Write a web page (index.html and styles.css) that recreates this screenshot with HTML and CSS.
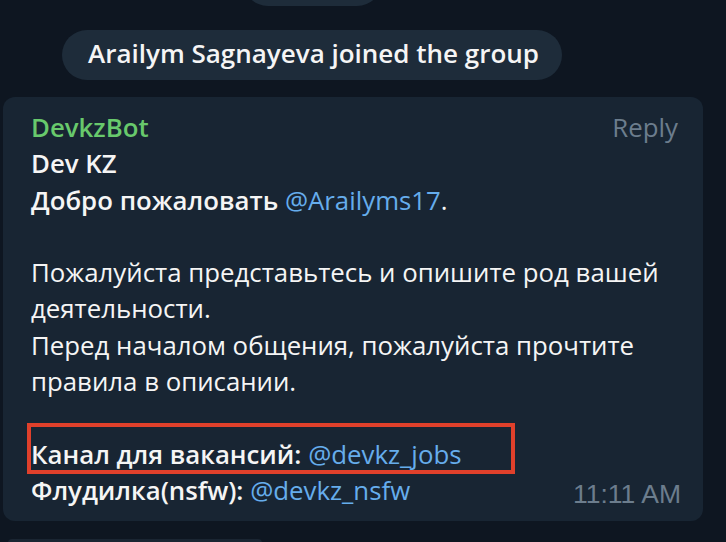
FILE: index.html
```html
<!DOCTYPE html>
<html lang="en">
<head>
    <meta charset="UTF-8">
    <meta name="viewport" content="width=device-width, initial-scale=1.0">
    <title>Dev KZ</title>
    <link rel="stylesheet" href="styles.css">
</head>
<body>
    <div class="chat">
        <div class="service service-prev"></div>
        <div class="service">Arailym Sagnayeva joined the group</div>

        <div class="bubble">
            <div class="head">
                <span class="name">DevkzBot</span>
                <span class="reply">Reply</span>
            </div>
            <div class="line"><b>Dev KZ</b></div>
            <div class="line"><b>Добро пожаловать</b> <a href="#">@Arailyms17</a>.</div>
            <div class="line empty"></div>
            <div class="line">Пожалуйста представьтесь и опишите род вашей</div>
            <div class="line">деятельности.</div>
            <div class="line">Перед началом общения, пожалуйста прочтите</div>
            <div class="line">правила в описании.</div>
            <div class="line empty"></div>
            <div class="line marked"><b>Канал для вакансий:</b> <a href="#">@devkz_jobs</a></div>
            <div class="line last">
                <span><b>Флудилка(nsfw):</b> <a href="#">@devkz_nsfw</a></span>
                <span class="time">11:11 AM</span>
            </div>
        </div>

        <div class="bubble-next"></div>
    </div>
</body>
</html>
```

FILE: styles.css
```css
body { margin: 0; background: #0e1621; font-family: "Open Sans", sans-serif; color: #f5f5f5; overflow: hidden; }

.chat { display: flex; flex-direction: column; width: 726px; height: 542px; overflow: hidden; }
.chat > div { flex-shrink: 0; }

.service { align-self: flex-start; margin-left: 62px; height: 50px; padding: 0 23px 4px 26px; border-radius: 25px; background: #1e2c3a; font-size: 26px; font-weight: 600; line-height: 46px; box-sizing: border-box; }
.service-prev { margin-left: 243px; width: 139px; margin-top: -44px; padding: 0; }
.service + .service { margin-top: 24px; }

.bubble { margin: 17px 23px 0 3px; padding: 12px 25px 12px 28px; background: #182533; border-radius: 12px; font-size: 25.8px; line-height: 36.3px; }

.head { display: flex; justify-content: space-between; }
.name { color: #68c96c; font-weight: 600; }
.reply { color: #6c7d8d; }

.line b { font-weight: 600; }
.line a { color: #66adec; text-decoration: none; }
.empty { height: 36.3px; }

.marked { position: relative; }
.marked::after { content: ""; position: absolute; left: -4px; top: -13px; bottom: -2px; width: 488px; border: 4px solid #e0402b; box-sizing: border-box; }

.last { display: flex; justify-content: space-between; align-items: baseline; }
.time { color: #6c7d8d; font-family: "Liberation Sans", Arial, sans-serif; font-size: 26.5px; margin-right: -3px; position: relative; top: 3px; }

.bubble-next { margin: 18px 0 0 8px; width: 254px; height: 4px; background: #1a2532; border-radius: 4px 4px 0 0; }
```
